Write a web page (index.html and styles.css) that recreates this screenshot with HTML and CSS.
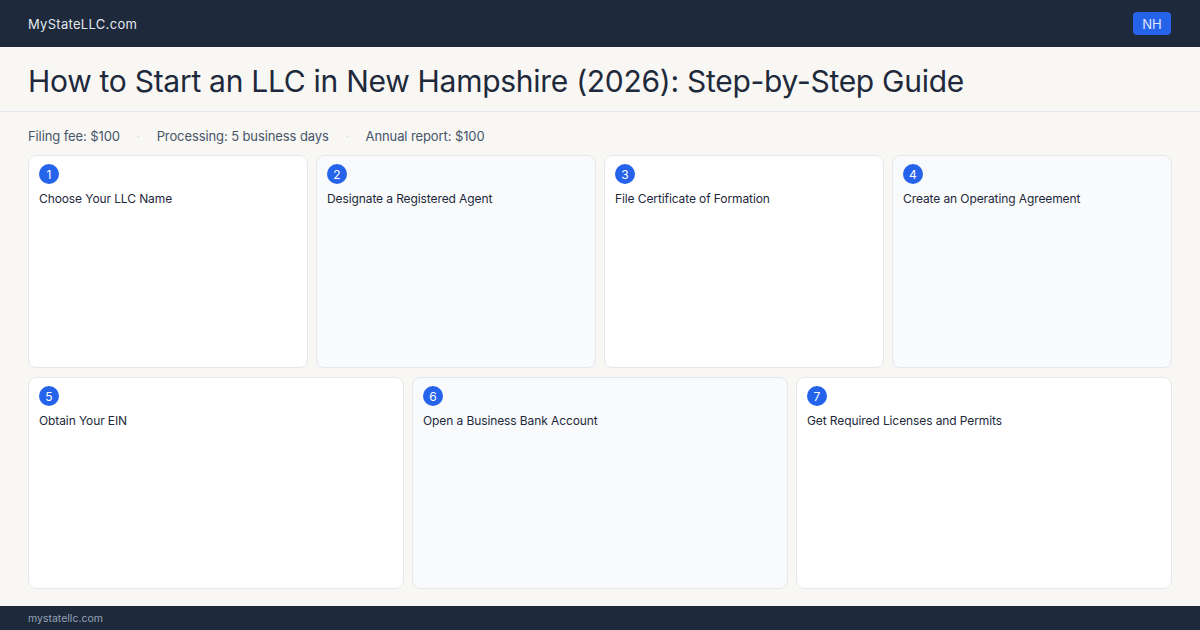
FILE: index.html
```html
<!DOCTYPE html>
<html lang="en">
<head>
  <meta charset="UTF-8">
  <title>How to Start an LLC in New Hampshire</title>
  <link rel="stylesheet" href="styles.css">
</head>
<body>

<header class="topbar">
  <div class="brand">MyStateLLC.com</div>
  <div class="state-badge">NH</div>
</header>

<div class="title-band">
  <h1>How to Start an LLC in New Hampshire (2026): Step-by-Step Guide</h1>
</div>

<main class="content">
  <div class="meta">
    <span>Filing fee: $100</span>
    <span class="sep">·</span>
    <span>Processing: 5 business days</span>
    <span class="sep">·</span>
    <span>Annual report: $100</span>
  </div>

  <div class="steps steps-four">
    <div class="step">
      <div class="num">1</div>
      <div class="step-title">Choose Your LLC Name</div>
    </div>
    <div class="step alt">
      <div class="num">2</div>
      <div class="step-title">Designate a Registered Agent</div>
    </div>
    <div class="step">
      <div class="num">3</div>
      <div class="step-title">File Certificate of Formation</div>
    </div>
    <div class="step alt">
      <div class="num">4</div>
      <div class="step-title">Create an Operating Agreement</div>
    </div>
  </div>

  <div class="steps steps-three">
    <div class="step">
      <div class="num">5</div>
      <div class="step-title">Obtain Your EIN</div>
    </div>
    <div class="step alt">
      <div class="num">6</div>
      <div class="step-title">Open a Business Bank Account</div>
    </div>
    <div class="step">
      <div class="num">7</div>
      <div class="step-title">Get Required Licenses and Permits</div>
    </div>
  </div>
</main>

<footer class="footer">mystatellc.com</footer>

</body>
</html>
```

FILE: styles.css
```css
* {
  box-sizing: border-box;
}

body {
  margin: 0;
  font-family: Inter, "Noto Sans", Arial, sans-serif;
  background: #f8f7f4;
  color: #1e293b;
  width: 1200px;
  height: 630px;
  overflow: hidden;
}

.topbar {
  height: 47px;
  background: #1e293b;
  display: flex;
  align-items: center;
  justify-content: space-between;
  padding: 0 29px 0 28px;
}

.brand {
  color: #e2e8f0;
  font-size: 13px;
  letter-spacing: 0.3px;
}

.state-badge {
  background: #2563eb;
  color: #e0e7ff;
  font-size: 13px;
  width: 38px;
  height: 23px;
  border-radius: 4px;
  display: flex;
  align-items: center;
  justify-content: center;
}

.title-band {
  height: 65px;
  border-bottom: 1px solid #e2e8f0;
  padding: 3px 28px 0;
  display: flex;
  align-items: center;
}

h1 {
  margin: 0;
  font-size: 30px;
  font-weight: 400;
  color: #1e293b;
  letter-spacing: -0.28px;
}

.content {
  padding: 17px 28px 0;
  height: 494px;
}

.meta {
  line-height: 15px;
  height: 15px;
  font-size: 13px;
  color: #475569;
  display: flex;
  gap: 17px;
  margin-bottom: 11px;
  letter-spacing: -0.1px;
}

.meta .sep {
  color: #cbd5e1;
  font-size: 10px;
}

.steps {
  display: grid;
  gap: 8px;
}

.steps-four {
  grid-template-columns: repeat(4, 1fr);
  height: 213px;
  margin-bottom: 9px;
}

.steps-three {
  grid-template-columns: repeat(3, 1fr);
  height: 212px;
}

.step {
  background: #ffffff;
  border: 1px solid #e2e8f0;
  border-radius: 8px;
  padding: 8px 10px;
}

.step.alt {
  background: #f8fafc;
}

.num {
  width: 20px;
  height: 20px;
  border-radius: 50%;
  background: #2563eb;
  color: #ffffff;
  font-size: 12px;
  display: flex;
  align-items: center;
  justify-content: center;
}

.step-title {
  margin-top: 7px;
  font-size: 12px;
  line-height: 16px;
  color: #1e293b;
  letter-spacing: -0.1px;
}

.footer {
  height: 24px;
  background: #1e293b;
  color: #94a3b8;
  font-size: 10.5px;
  padding: 0 28px;
  display: flex;
  align-items: center;
}
```
